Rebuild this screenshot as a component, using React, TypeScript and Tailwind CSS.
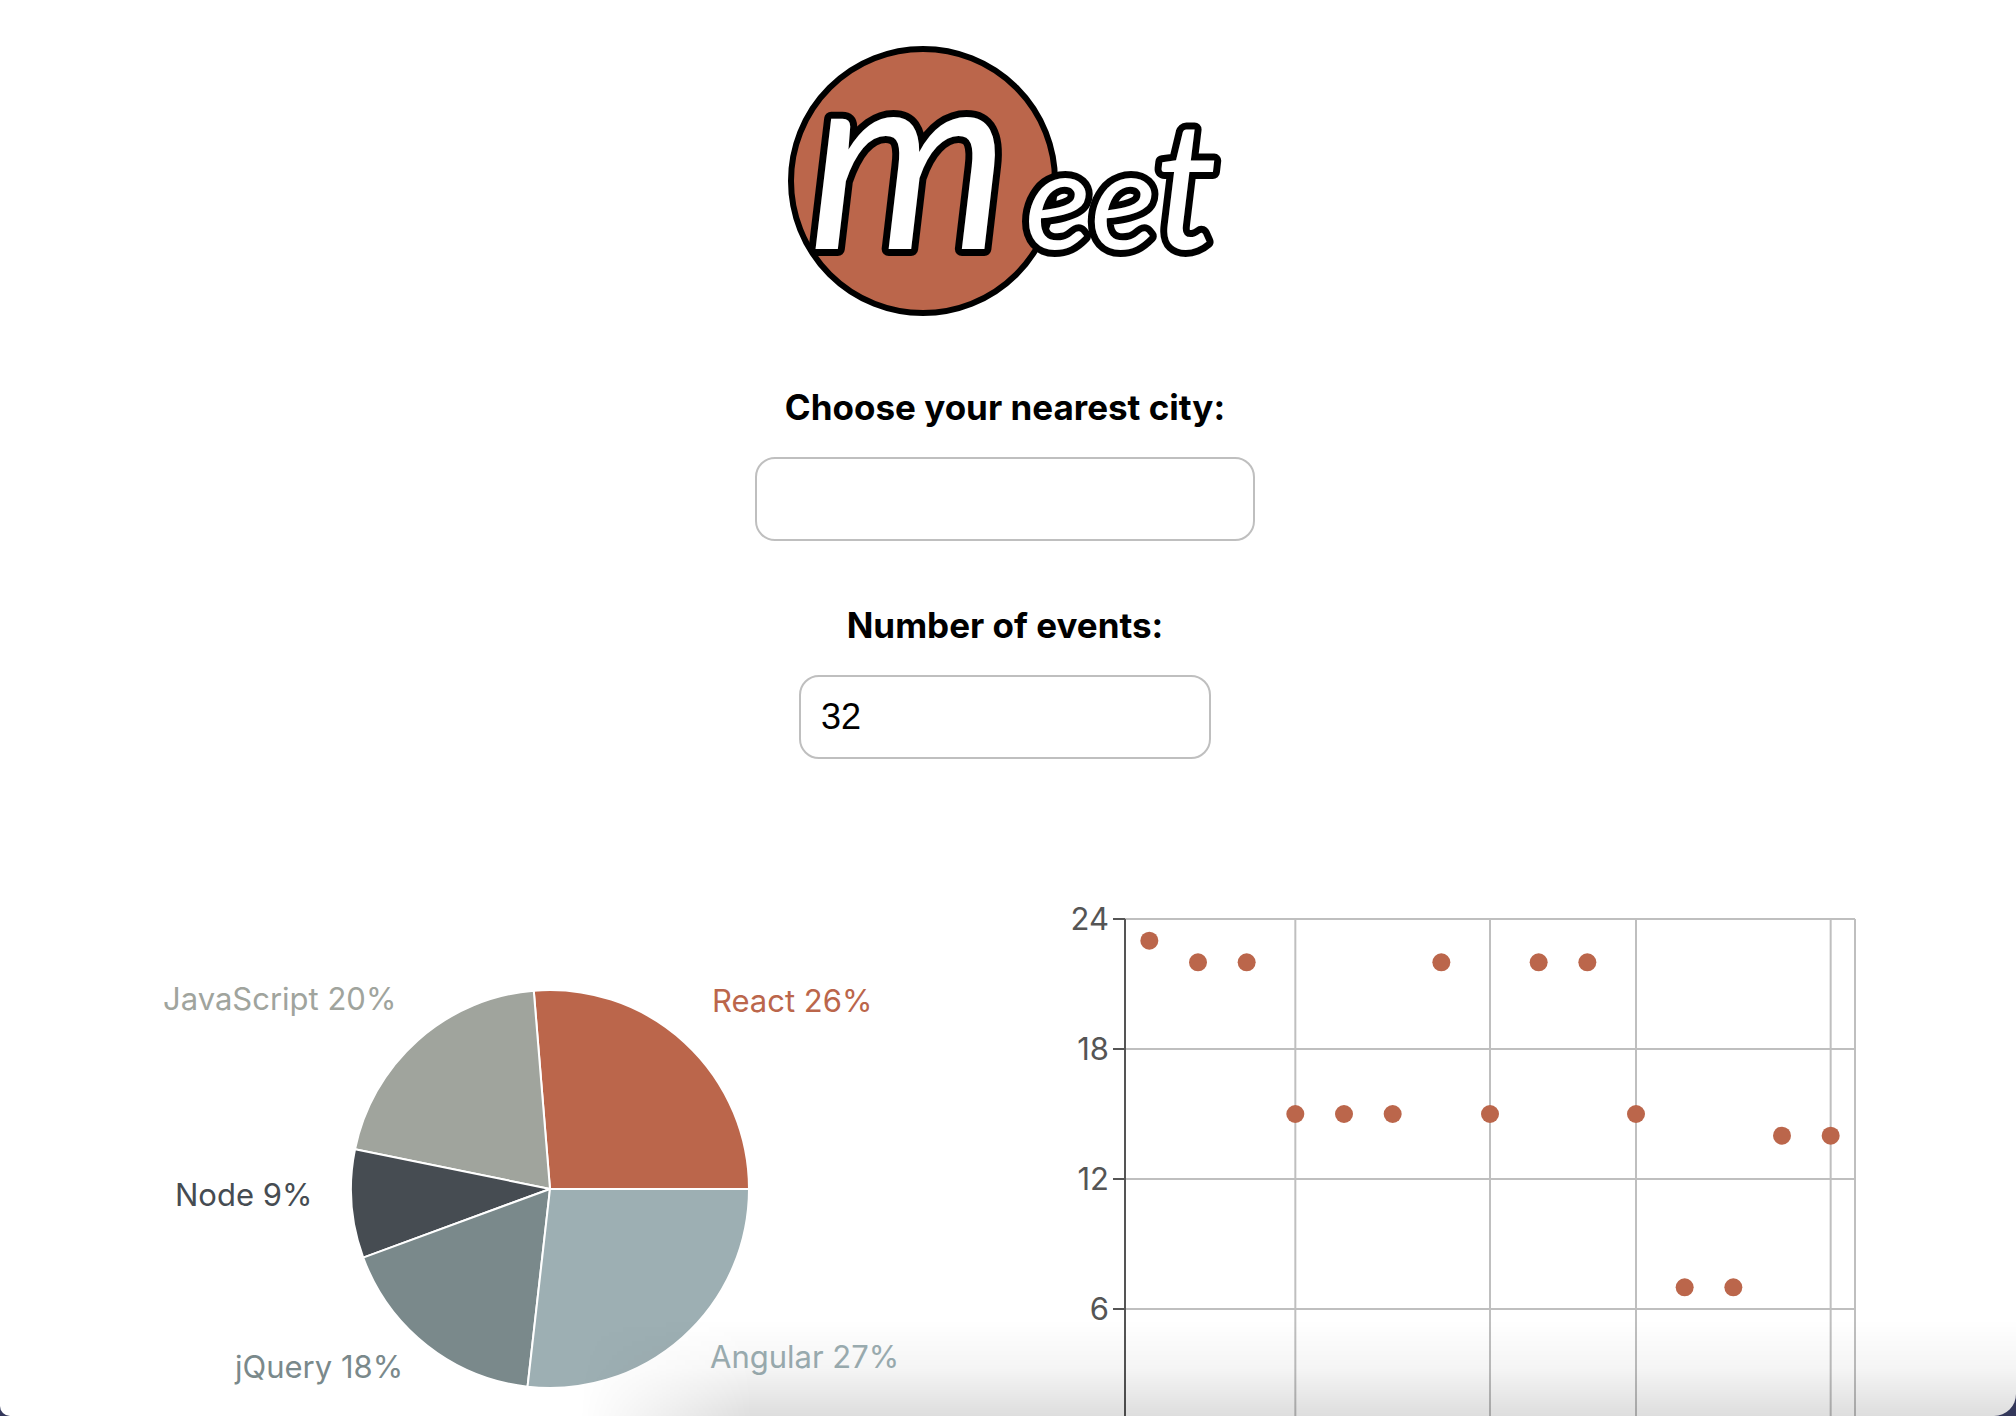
const genres = [
  { name: 'React', share: 263, percent: 26, fill: '#bb664b', x: 712, y: 133 },
  { name: 'JavaScript', share: 205, percent: 20, fill: '#a0a49d', x: 163, y: 131 },
  { name: 'Node', share: 88, percent: 9, fill: '#464c52', x: 175, y: 327 },
  { name: 'jQuery', share: 176, percent: 18, fill: '#7a898b', x: 235, y: 499 },
  { name: 'Angular', share: 268, percent: 27, fill: '#9dafb3', x: 710, y: 489 },
];

const eventCounts = [23, 22, 22, 15, 15, 15, 22, 15, 22, 22, 15, 7, 7, 14, 14];
const countTicks = [0, 6, 12, 18, 24];
const cityTicks = [3, 7, 10, 14];

function Logo() {
  return (
    <svg viewBox="0 0 440 276" className="h-[276px] w-[440px]" role="img" aria-label="Meet">
      <circle cx="138" cy="138" r="132" fill="#bb664b" stroke="#000" strokeWidth="6" />
      <text
        x="23"
        y="206"
        className="font-['Lato',sans-serif] italic"
        fill="#fff"
        stroke="#000"
        strokeWidth="14"
        strokeLinejoin="round"
        paintOrder="stroke"
      >
        <tspan fontSize="256">m</tspan>
        <tspan x="240" fontSize="138">ee</tspan>
        <tspan x="370" fontSize="176">t</tspan>
      </text>
    </svg>
  );
}

function GenresChart() {
  const cx = 550;
  const cy = 310;
  const r = 199;
  const point = (a: number) => `${cx + r * Math.cos(a)} ${cy - r * Math.sin(a)}`;
  let angle = 0;
  const slices = genres.map((g) => {
    const start = angle;
    angle += (g.share / 1000) * Math.PI * 2;
    return { ...g, d: `M${cx} ${cy}L${point(start)}A${r} ${r} 0 0 0 ${point(angle)}Z` };
  });
  return (
    <svg viewBox="0 0 1005 620" className="w-full" role="img" aria-label="Event genres">
      {slices.map((s) => (
        <path key={s.name} d={s.d} fill={s.fill} stroke="#fff" strokeWidth="2" strokeLinejoin="round" />
      ))}
      {slices.map((s) => (
        <text key={s.name} x={s.x} y={s.y} fill={s.fill} fontSize="31">
          {`${s.name} ${s.percent}%`}
        </text>
      ))}
    </svg>
  );
}

function CityEventsChart() {
  const x = (i: number) => 120 + (730 / 15) * (i + 0.5);
  const y = (v: number) => 560 - (520 / 24) * v;
  return (
    <svg viewBox="0 0 1005 620" className="w-full" role="img" aria-label="Events per city">
      <g stroke="#bfbfbf" strokeWidth="2">
        {countTicks.map((v) => (
          <line key={v} x1="120" x2="850" y1={y(v)} y2={y(v)} />
        ))}
        {cityTicks.map((i) => (
          <line key={i} x1={x(i)} x2={x(i)} y1="40" y2="560" />
        ))}
        <line x1="850" x2="850" y1="40" y2="560" />
      </g>
      <g stroke="#555" strokeWidth="2">
        <line x1="120" x2="120" y1="40" y2="560" />
        {countTicks.map((v) => (
          <line key={v} x1="108" x2="120" y1={y(v)} y2={y(v)} />
        ))}
      </g>
      <g fill="#555" fontSize="31" textAnchor="end">
        {countTicks.slice(1).map((v) => (
          <text key={v} x="104" y={y(v) + 11}>
            {v}
          </text>
        ))}
      </g>
      <g fill="#bb664b">
        {eventCounts.map((c, i) => (
          <circle key={i} cx={x(i)} cy={y(c)} r="9" />
        ))}
      </g>
    </svg>
  );
}

export default function App() {
  return (
    <div className="h-screen overflow-hidden bg-[#33375a]">
      <div className="relative h-full overflow-hidden rounded-br-[22px] rounded-bl-[10px] bg-white font-['Inter',sans-serif] text-black">
        <main className="flex flex-col items-center pr-[6px]">
          <h1 className="mt-[43px]">
            <Logo />
          </h1>
          <label htmlFor="city" className="mt-[66px] text-[35px] leading-[44px] font-bold">
            Choose your nearest city:
          </label>
          <input
            id="city"
            type="text"
            className="mt-7 h-[84px] w-[500px] rounded-[20px] border-2 border-[#bfbfbf] px-5 font-['Liberation_Sans',sans-serif] text-4xl"
          />
          <label htmlFor="count" className="mt-[62px] text-[35px] leading-[44px] font-bold">
            Number of events:
          </label>
          <input
            id="count"
            type="text"
            defaultValue="32"
            className="mt-7 h-[84px] w-[412px] rounded-[20px] border-2 border-[#bfbfbf] px-5 font-['Liberation_Sans',sans-serif] text-4xl"
          />
          <section className="mt-[120px] grid w-full grid-cols-2">
            <GenresChart />
            <CityEventsChart />
          </section>
        </main>
        <div className="pointer-events-none absolute right-0 bottom-0 left-[580px] h-24 bg-linear-to-b from-black/0 via-black/4 to-black/13 mask-l-from-[88%] mask-l-to-100%" />
      </div>
    </div>
  );
}
